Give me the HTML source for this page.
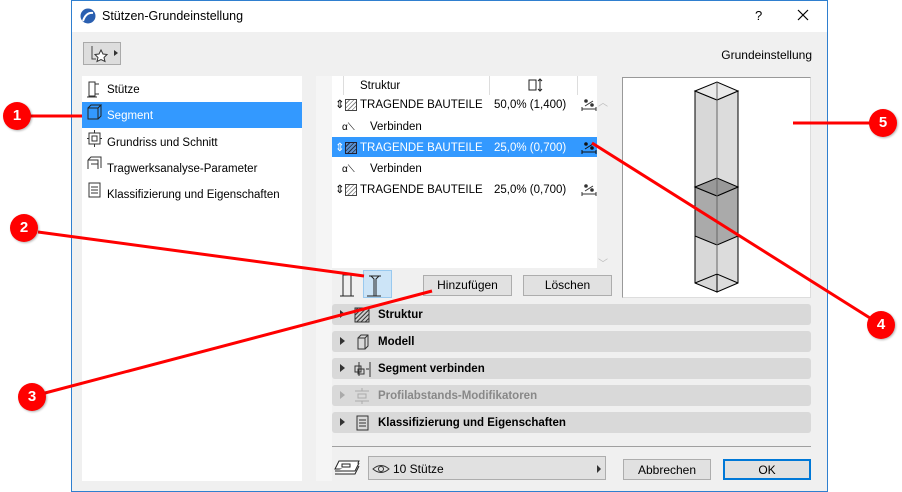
<!DOCTYPE html><html><head><meta charset="utf-8"><style>
*{box-sizing:border-box;margin:0;padding:0}
body{width:902px;height:492px;background:#fff;position:relative;overflow:hidden;font-family:"Liberation Sans",sans-serif;font-size:11.5px;color:#000}
.a{position:absolute}
.dlg{left:71px;top:0;width:757px;height:492px;border:1px solid #2f7fcf;background:#f0f0f0}
.btn{position:absolute;background:#e1e1e1;border:1px solid #adadad;text-align:center;line-height:19px;font-size:12px}
.bar{position:absolute;left:332px;width:479px;height:21px;background:#d9d9d9;border-radius:3px;font-weight:bold;font-size:11.5px;line-height:23px}
.bar .t{position:absolute;left:46px}
.bar .tri{position:absolute;left:8px;top:6px;width:0;height:0;border-left:5px solid #333;border-top:4px solid transparent;border-bottom:4px solid transparent}
.row{position:absolute;left:332px;width:265px;height:19px;line-height:21px}
.circ{position:absolute;width:28px;height:28px;border-radius:50%;background:#f00;color:#fff;font-weight:bold;font-size:15px;text-align:center;line-height:28px;box-shadow:1px 1px 2px rgba(0,0,0,.3)}
.ic{position:absolute;left:249px;top:3px}
</style></head><body>
<div class="a dlg"></div>
<div class="a" style="left:72px;top:1px;width:755px;height:31px;background:#fff"></div>
<svg class="a" style="left:80px;top:8px" width="16" height="16"><circle cx="8" cy="8" r="7.5" fill="#2a5fb0"/><path d="M3 13 Q6 4 13 5" stroke="#fff" stroke-width="2" fill="none"/></svg>
<div class="a" style="left:102px;top:9px;font-size:12.5px">Stützen-Grundeinstellung</div>
<div class="a" style="left:755px;top:8px;font-size:13px">?</div>
<svg class="a" style="left:797px;top:9px" width="12" height="12"><path d="M1 1L11 11M11 1L1 11" stroke="#000" stroke-width="1.2"/></svg>
<div class="a" style="left:83px;top:42px;width:38px;height:23px;background:#ddd;border:1px solid #aaa"></div>
<svg class="a" style="left:88px;top:44px" width="32" height="20"><path d="M4 2v13h4" stroke="#444" fill="none"/><path d="M13 6l2 4 4 .5-3 3 1 4-4-2-4 2 1-4-3-3 4-.5z" stroke="#333" fill="#fff"/><path d="M26 6l4 3-4 3z" fill="#333"/></svg>
<div class="a" style="right:90px;top:48px;font-size:12px">Grundeinstellung</div>
<div class="a" style="left:82px;top:76px;width:220px;height:405px;background:#fff"></div>
<div class="a" style="left:82px;top:102px;width:220px;height:26px;background:#3399ff"></div>
<svg class="a" style="left:86px;top:80px" width="18" height="120" fill="none" stroke="#333"><path d="M3 2h6v14H3zM9 4h4M9 14h4M1 17h10"/><path d="M2 28h10v11H2zM2 28l3-3h10l-3 3M12 39l3-3V25" stroke="#222"/><path d="M3 53h11v11H3zM6 56h5v5H6zM8.5 50v3M8.5 64v3M1 58.5h2M14 58.5h2"/><path d="M2 80l3-3h10v11M2 80h10v9M2 80v9M5 84h7"/><path d="M3 103h11v14H3zM5 107h7M5 110h7M5 113h7"/></svg>
<div class="a" style="left:107px;top:84px">Stütze</div>
<div class="a" style="left:107px;top:110px;color:#fff">Segment</div>
<div class="a" style="left:107px;top:137px">Grundriss und Schnitt</div>
<div class="a" style="left:107px;top:163px">Tragwerksanalyse-Parameter</div>
<div class="a" style="left:107px;top:189px">Klassifizierung und Eigenschaften</div>
<div class="a" style="left:316px;top:76px;width:16px;height:405px;background:#f5f5f5"></div>
<div class="a" style="left:332px;top:76px;width:265px;height:192px;background:#fff"></div>
<div class="a" style="left:597px;top:76px;width:18px;height:192px;background:#f0f0f0"></div>
<div class="a" style="left:343px;top:76px;width:1px;height:19px;background:#ddd"></div>
<div class="a" style="left:489px;top:76px;width:1px;height:19px;background:#ddd"></div>
<div class="a" style="left:577px;top:76px;width:1px;height:19px;background:#ddd"></div>
<div class="a" style="left:360px;top:80px">Struktur</div>
<svg class="a" style="left:528px;top:78px" width="16" height="14" fill="none" stroke="#222"><path d="M1 2h7v10H1zM12 1v12M10 3l2-2 2 2M10 11l2 2 2-2"/></svg>
<div class="a" style="left:332px;top:137px;width:265px;height:20px;background:#3399ff"></div>
<div class="row" style="top:95px"><span class="a" style="left:3px">⇕</span><span class="a" style="left:13px;top:4px;width:12px;height:12px;border:1px solid #444;background:repeating-linear-gradient(135deg,#fff 0 2px,#888 2px 3px)"></span><span class="a" style="left:28px">TRAGENDE BAUTEILE</span><span class="a" style="left:162px">50,0% (1,400)</span><svg class="ic" width="16" height="14" fill="none" stroke="#333"><path d="M1 11h14M1 9v4M15 9v4M4 8l8-5"/><circle cx="5" cy="3" r="1.3" fill="#333"/><circle cx="11" cy="7" r="1.3" fill="#333"/></svg></div>
<div class="row" style="top:117px"><span class="a" style="left:10px;font-size:10px">α⟍</span><span class="a" style="left:38px">Verbinden</span></div>
<div class="row" style="top:138px;color:#fff"><span class="a" style="left:3px">⇕</span><span class="a" style="left:13px;top:4px;width:12px;height:12px;border:1px solid #223;background:repeating-linear-gradient(135deg,#5a8fd0 0 2px,#234 2px 3px)"></span><span class="a" style="left:28px">TRAGENDE BAUTEILE</span><span class="a" style="left:162px">25,0% (0,700)</span><svg class="ic" width="16" height="14" fill="none" stroke="#111"><path d="M1 11h14M1 9v4M15 9v4M4 8l8-5"/><circle cx="5" cy="3" r="1.3" fill="#111"/><circle cx="11" cy="7" r="1.3" fill="#111"/></svg></div>
<div class="row" style="top:159px"><span class="a" style="left:10px;font-size:10px">α⟍</span><span class="a" style="left:38px">Verbinden</span></div>
<div class="row" style="top:180px"><span class="a" style="left:3px">⇕</span><span class="a" style="left:13px;top:4px;width:12px;height:12px;border:1px solid #444;background:repeating-linear-gradient(135deg,#fff 0 2px,#888 2px 3px)"></span><span class="a" style="left:28px">TRAGENDE BAUTEILE</span><span class="a" style="left:162px">25,0% (0,700)</span><svg class="ic" width="16" height="14" fill="none" stroke="#333"><path d="M1 11h14M1 9v4M15 9v4M4 8l8-5"/><circle cx="5" cy="3" r="1.3" fill="#333"/><circle cx="11" cy="7" r="1.3" fill="#333"/></svg></div>
<div class="a" style="left:598px;top:94px;color:#bbb;font-size:10px">︿</div>
<div class="a" style="left:598px;top:255px;color:#bbb;font-size:10px">﹀</div>
<div class="a" style="left:363px;top:270px;width:29px;height:28px;background:#cce4f7;border:1px solid #99c9ef"></div>
<svg class="a" style="left:336px;top:270px" width="60" height="28" fill="none" stroke="#222"><path d="M4 26h14M7 26V5h8v21M31 26h14M33 6h12M35 6l3 3v17M43 6l-3 3v17"/></svg>
<div class="btn" style="left:423px;top:275px;width:89px;height:21px">Hinzufügen</div>
<div class="btn" style="left:523px;top:275px;width:89px;height:21px">Löschen</div>
<div class="a" style="left:622px;top:77px;width:189px;height:221px;background:#fff;border:1px solid #999;border-right-color:#ddd;border-bottom-color:#ddd"></div>
<svg class="a" style="left:622px;top:77px" width="189" height="221" stroke="#000" stroke-width="1"><path d="M73 14V206L95 215V23Z" fill="#d8d8d8"/><path d="M95 23V215L116 206V14Z" fill="#dcdcdc"/><path d="M73 14L95 5L116 14L95 23Z" fill="#eaeaea"/><path d="M73 110V159L95 168V119ZM95 119V168L116 159V110Z" fill="#aaa"/><path d="M73 110L95 101L116 110L95 119Z" fill="#999"/><path d="M73 206L95 197L116 206" stroke="#000" fill="none"/><path d="M95 5V197" stroke="#666"/></svg>
<div class="bar" style="top:304px"><div class="tri"></div><svg class="a" style="left:22px;top:3px" width="16" height="16"><defs><pattern id="h" width="3" height="3" patternUnits="userSpaceOnUse" patternTransform="rotate(45)"><rect width="3" height="3" fill="#ccc"/><rect width="1" height="3" fill="#333"/></pattern></defs><rect x="1" y="1" width="14" height="14" fill="url(#h)" stroke="#333"/></svg><span class="t">Struktur</span></div>
<div class="bar" style="top:331px"><div class="tri"></div><svg class="a" style="left:24px;top:3px" width="14" height="16" fill="none" stroke="#333"><path d="M2 4h7v11H2zM2 4l3-3h7v11l-3 3M9 4l3-3"/></svg><span class="t">Modell</span></div>
<div class="bar" style="top:358px"><div class="tri"></div><svg class="a" style="left:20px;top:2px" width="22" height="18" fill="none" stroke="#333"><path d="M3 6h6v6H3zM6 9h6v5H6zM7 2v14M14 9h3M18 2v15"/></svg><span class="t">Segment verbinden</span></div>
<div class="bar" style="top:385px;color:#888"><div class="tri" style="border-left-color:#aaa"></div><svg class="a" style="left:20px;top:2px" width="20" height="18" fill="none" stroke="#aaa"><path d="M3 4h14M3 14h14M6 7h8v4H6zM10 1v3M10 14v3"/></svg><span class="t">Profilabstands-Modifikatoren</span></div>
<div class="bar" style="top:412px"><div class="tri"></div><svg class="a" style="left:24px;top:3px" width="14" height="16" fill="none" stroke="#333"><path d="M1 1h11v14H1zM3 5h7M3 8h7M3 11h7"/></svg><span class="t">Klassifizierung und Eigenschaften</span></div>
<div class="a" style="left:332px;top:446px;width:479px;height:1px;background:#a0a0a0"></div>
<svg class="a" style="left:334px;top:458px" width="28" height="20" fill="#fff" stroke="#222"><path d="M5 3h20l-4 8H1z"/><path d="M1 13h20l4-8M1 16h20l4-8"/><path d="M8 6h8v3H8z"/></svg>
<div class="btn" style="left:368px;top:456px;width:238px;height:24px;text-align:left;line-height:24px;padding-left:24px">10 Stütze</div>
<svg class="a" style="left:372px;top:464px" width="18" height="10" fill="none" stroke="#333"><path d="M1 5Q9-2 17 5Q9 12 1 5Z"/><circle cx="9" cy="5" r="2.5"/></svg>
<div class="a" style="left:597px;top:465px;border-left:4px solid #333;border-top:4px solid transparent;border-bottom:4px solid transparent"></div>
<div class="btn" style="left:623px;top:459px;width:88px;height:21px;line-height:21px">Abbrechen</div>
<div class="btn" style="left:723px;top:459px;width:88px;height:21px;border:2px solid #0078d7;line-height:19px">OK</div>
<svg class="a" style="left:0;top:0" width="902" height="492" stroke="#f00" stroke-width="3"><line x1="30" y1="116" x2="82" y2="116"/><line x1="38" y1="232" x2="364" y2="276"/><line x1="45" y1="393" x2="432" y2="291"/><line x1="592" y1="143" x2="870" y2="318"/><line x1="793" y1="123" x2="870" y2="123"/></svg>
<div class="circ" style="left:3px;top:102px">1</div>
<div class="circ" style="left:10px;top:214px">2</div>
<div class="circ" style="left:18px;top:383px">3</div>
<div class="circ" style="left:867px;top:311px">4</div>
<div class="circ" style="left:869px;top:109px">5</div>
</body></html>
